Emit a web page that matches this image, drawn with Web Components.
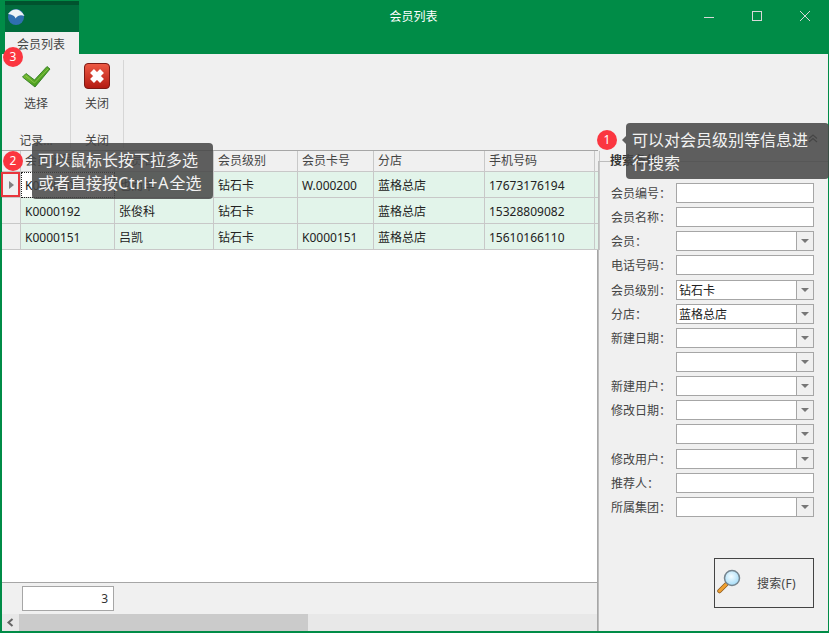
<!DOCTYPE html>
<html lang="zh">
<head>
<meta charset="utf-8">
<title>会员列表</title>
<style>
html, body { margin: 0; height: 100%; overflow: hidden; }
body { font: 12px "Noto Sans", "Noto Sans CJK SC", sans-serif; color: #333; }
</style>
</head>
<body>
<app-window>
    <title-bar slot="title" caption="会员列表" tab="会员列表"></title-bar>
    <ribbon-bar slot="ribbon">
        <ribbon-group label="记录..." width="68">
            <tool-button icon="check" text="选择"></tool-button>
        </ribbon-group>
        <ribbon-group label="关闭" width="52">
            <tool-button icon="close" text="关闭"></tool-button>
        </ribbon-group>
    </ribbon-bar>
    <data-grid slot="grid"></data-grid>
    <search-panel slot="side"></search-panel>
    <guide-tip style="left:30px;top:143px;width:181px;height:56px;padding:6px 0 0 6px">可以鼠标长按下拉多选<br>或者直接按<span style="letter-spacing:.9px">Ctrl+A</span>全选</guide-tip>
    <guide-tip arrow style="left:624px;top:123px;width:203px;height:56px;padding:6px 0 0 6px">可以对会员级别等信息进<br>行搜索</guide-tip>
    <step-badge n="3" style="left:1px;top:47px"></step-badge>
    <step-badge n="2" style="left:1px;top:151px"></step-badge>
    <step-badge n="1" style="left:595px;top:130px"></step-badge>
    <div style="position:absolute;left:-1px;top:172px;width:19px;height:25px;border:2px solid #e8363c;box-sizing:border-box"></div>
</app-window>

<script>
customElements.define('app-window', class AppWindow extends HTMLElement {
    constructor() {
        super();
        this.attachShadow({ mode: 'open' });
        this.shadowRoot.innerHTML = `
        <style>
            :host {
                display: flex;
                flex-direction: column;
                position: relative;
                width: 829px;
                height: 633px;
                box-sizing: border-box;
                border-left: 2px solid #008c47;
                border-right: 1px solid #008c47;
                border-bottom: 2px solid #008c47;
                background: #f0f0f0;
            }
            .body { flex: 1; display: flex; min-height: 0; }
        </style>
        <slot name="title"></slot>
        <slot name="ribbon"></slot>
        <div class="body">
            <slot name="grid"></slot>
            <slot name="side"></slot>
        </div>
        <slot></slot>
        `;
    }
});

customElements.define('title-bar', class TitleBar extends HTMLElement {
    constructor() {
        super();
        this.attachShadow({ mode: 'open' });
    }
    connectedCallback() {
        this.shadowRoot.innerHTML = `
        <style>
            :host {
                display: block;
                position: relative;
                height: 54px;
                margin: 0 -1px 0 -2px;
                background: #008c47;
                flex: none;
            }
            .caption {
                text-align: center;
                color: #fff;
                padding: 9px 2px 0 0;
                line-height: 16px;
                font-size: 12px;
            }
            .app {
                position: absolute;
                left: 5px; top: 1px;
                width: 74px; height: 53px;
                display: flex;
                flex-direction: column;
            }
            .logo {
                height: 31px;
                background: #006b3c;
                border-top: 4px solid #00532e;
                box-sizing: border-box;
                padding: 3px 0 0 2px;
            }
            .logo svg { display: block; }
            .tab {
                flex: 1;
                background: #f0f0f0;
                text-align: left;
                padding: 5px 0 0 12px;
                line-height: 16px;
                color: #444;
            }
            .btns { position: absolute; right: 0; top: 0; display: flex; }
            .btns svg { width: 46px; height: 32px; display: block; }
        </style>
        <div class="caption">${this.getAttribute('caption')}</div>
        <div class="app">
            <div class="logo">
                <svg width="18" height="18" viewBox="0 0 18 18">
                    <circle cx="9" cy="9" r="8" fill="#2f6fb0"/>
                    <path d="M1 6 C4 2 7 1 10 1.500 C13 2 15 4 17.500 8 C14 6.500 11 7 8.500 10.500 C8 8 5 6.500 1 6Z" fill="#eef3f6"/>
                </svg>
            </div>
            <div class="tab">${this.getAttribute('tab')}</div>
        </div>
        <div class="btns">
            <svg viewBox="0 0 46 32"><path d="M13 17.500H23" stroke="#d8d8d8" fill="none"/></svg>
            <svg viewBox="0 0 46 32"><rect x="15.500" y="11.500" width="9" height="9" stroke="#d8d8d8" fill="none"/></svg>
            <svg viewBox="0 0 46 32"><path d="M17 11L27 21M27 11L17 21" stroke="#d8d8d8" fill="none"/></svg>
        </div>
        `;
    }
});

customElements.define('ribbon-bar', class RibbonBar extends HTMLElement {
    constructor() {
        super();
        this.attachShadow({ mode: 'open' });
        this.shadowRoot.innerHTML = `
        <style>
            :host {
                display: flex;
                height: 96px;
                flex: none;
                padding-top: 6px;
                box-sizing: border-box;
                background: #f0f0f0;
            }
        </style>
        <slot></slot>
        `;
    }
});

customElements.define('ribbon-group', class RibbonGroup extends HTMLElement {
    constructor() {
        super();
        this.attachShadow({ mode: 'open' });
    }
    connectedCallback() {
        this.shadowRoot.innerHTML = `
        <style>
            :host {
                display: flex;
                flex-direction: column;
                align-items: center;
                width: ${this.getAttribute('width')}px;
                height: 88px;
                border-right: 1px solid #d6d6d6;
                color: #444;
            }
            .label { margin-top: auto; line-height: 16px; margin-bottom: -1px; }
        </style>
        <slot></slot>
        <div class="label">${this.getAttribute('label')}</div>
        `;
    }
});

const TOOL_ICONS = {
    check: `<svg width="30" height="30" viewBox="0 0 30 30">
        <defs><linearGradient id="g" x1="0" y1="0" x2="1" y2="1"><stop offset="0" stop-color="#8fcb3c"/><stop offset="1" stop-color="#2c8a12"/></linearGradient></defs>
        <path d="M1.500 17 L5 13.500 L13.500 20 L26 6.500 L29 9 L14 27 Z" fill="url(#g)" stroke="#2f7a22" stroke-width=".9" stroke-linejoin="round"/>
        <path d="M5 16 L13.500 23 L27 9" fill="none" stroke="#b6e070" stroke-width=".8" opacity=".6"/>
    </svg>`,
    close: `<svg width="30" height="30" viewBox="0 0 30 30">
        <defs><linearGradient id="r" x1="0" y1="0" x2="0" y2="1"><stop offset="0" stop-color="#ee5a44"/><stop offset="1" stop-color="#b31a12"/></linearGradient></defs>
        <rect x="2.500" y="3.500" width="25" height="25" rx="3.500" fill="url(#r)" stroke="#7c1a14"/>
        <path d="M10 11 L20 21 M20 11 L10 21" stroke="#fff" stroke-width="5.500" fill="none"/>
    </svg>`
};

customElements.define('tool-button', class ToolButton extends HTMLElement {
    constructor() {
        super();
        this.attachShadow({ mode: 'open' });
    }
    connectedCallback() {
        this.shadowRoot.innerHTML = `
        <style>
            :host {
                display: flex;
                flex-direction: column;
                align-items: center;
                color: #444;
            }
            svg { display: block; }
            .text { margin-top: 6px; line-height: 16px; }
        </style>
        ${TOOL_ICONS[this.getAttribute('icon')]}
        <div class="text">${this.getAttribute('text')}</div>
        `;
    }
});

customElements.define('data-grid', class DataGrid extends HTMLElement {
    constructor() {
        super();
        this.attachShadow({ mode: 'open' });
        const head = ['会员编号', '会员名称', '会员级别', '会员卡号', '分店', '手机号码'];
        const rows = [
            ['K0000200', '也而羊', '钻石卡', 'W.000200', '蓝格总店', '17673176194'],
            ['K0000192', '张俊科', '钻石卡', '', '蓝格总店', '15328809082'],
            ['K0000151', '吕凯', '钻石卡', 'K0000151', '蓝格总店', '15610166110']
        ];
        const cell = (c, cls) => `<div class="${cls}">${c}</div>`;
        const body = rows.map((r, i) => `
            <div class="rowhead">${i === 0 ? '<span class="arrow"></span>' : ''}</div>
            ${r.map((c, j) => cell(c, 'td' + (i === 0 && j === 0 ? ' current' : ''))).join('')}
            <div class="td"></div>
        `).join('');
        this.shadowRoot.innerHTML = `
        <style>
            :host {
                display: flex;
                flex-direction: column;
                width: 596px;
                flex: none;
                border-top: 1px solid #a6a6a6;
                border-right: 1px solid #a6a6a6;
                box-sizing: border-box;
                background: #fff;
            }
            .table {
                flex: 1;
                display: grid;
                grid-template-columns: 19px 94px 99px 84px 76px 111px 110px 1fr;
                grid-auto-rows: 26px;
                grid-template-rows: 21px;
                align-content: start;
            }
            .rowhead, .th, .td {
                box-sizing: border-box;
                border-right: 1px solid #c8c8c8;
                border-bottom: 1px solid #c8c8c8;
                padding-left: 4px;
                line-height: 27px;
                white-space: nowrap;
                overflow: hidden;
            }
            .th { background: #f0f0f0; line-height: 19px; color: #444; }
            .rowhead {
                background: #f0f0f0;
                padding: 0;
                display: flex;
                align-items: center;
                justify-content: center;
            }
            .arrow {
                border-left: 5px solid #808080;
                border-top: 4px solid transparent;
                border-bottom: 4px solid transparent;
            }
            .td { background: #e2f4ea; color: #222; }
            .td.current { background: #fff; outline: 1px dotted #222; outline-offset: -1px; }
            .footer {
                flex: none;
                height: 32px;
                box-sizing: border-box;
                border-top: 1px solid #a6a6a6;
                background: #f0f0f0;
                padding: 3px 0 0 20px;
            }
            .count {
                width: 92px;
                height: 25px;
                box-sizing: border-box;
                border: 1px solid #a6a6a6;
                background: #fff;
                text-align: right;
                padding-right: 5px;
                line-height: 23px;
            }
            .scroll {
                flex: none;
                height: 17px;
                display: flex;
                background: #e8e8e8;
            }
            .scroll .left {
                width: 17px;
                display: flex;
                align-items: center;
                justify-content: center;
            }
            .scroll .thumb { width: 289px; background: #cbcbcb; }
        </style>
        <div class="table">
            <div class="rowhead"></div>
            ${head.map(h => cell(h, 'th')).join('')}
            <div class="th"></div>
            ${body}
        </div>
        <div class="footer"><div class="count">3</div></div>
        <div class="scroll">
            <div class="left">
                <svg width="9" height="9" viewBox="0 0 9 9"><path d="M6.500 1L2.500 4.500L6.500 8" fill="none" stroke="#666" stroke-width="2"/></svg>
            </div>
            <div class="thumb"></div>
        </div>
        `;
    }
});

customElements.define('search-field', class SearchField extends HTMLElement {
    constructor() {
        super();
        this.attachShadow({ mode: 'open' });
    }
    connectedCallback() {
        const combo = this.hasAttribute('combo');
        this.shadowRoot.innerHTML = `
        <style>
            :host {
                display: flex;
                align-items: center;
                height: 20px;
                color: #444;
            }
            .label { width: 65px; white-space: nowrap; }
            .box {
                width: 138px;
                height: 20px;
                box-sizing: border-box;
                border: 1px solid #a6a6a6;
                background: #fff;
                display: flex;
            }
            .value { flex: 1; padding-left: 2px; line-height: 20px; color: #222; }
            .drop {
                width: 16px;
                border-left: 1px solid #a6a6a6;
                background: #f0f0f0;
                display: flex;
                align-items: center;
                justify-content: center;
            }
            .drop i {
                border-top: 4px solid #777;
                border-left: 4px solid transparent;
                border-right: 4px solid transparent;
            }
        </style>
        <div class="label">${this.getAttribute('label')}</div>
        <div class="box">
            <div class="value">${this.getAttribute('value') || ''}</div>
            ${combo ? '<div class="drop"><i></i></div>' : ''}
        </div>
        `;
    }
});

customElements.define('search-panel', class SearchPanel extends HTMLElement {
    constructor() {
        super();
        this.attachShadow({ mode: 'open' });
        const fields = [
            ['会员编号：'], ['会员名称：'], ['会员：', 1], ['电话号码：'],
            ['会员级别：', 1, '钻石卡'], ['分店：', 1, '蓝格总店'], ['新建日期：', 1], ['', 1],
            ['新建用户：', 1], ['修改日期：', 1], ['', 1], ['修改用户：', 1],
            ['推荐人：'], ['所属集团：', 1]
        ];
        this.shadowRoot.innerHTML = `
        <style>
            :host {
                display: flex;
                flex-direction: column;
                flex: 1;
                position: relative;
                box-sizing: border-box;
                padding: 33px 0 0 13px;
            }
            .frame {
                position: absolute;
                left: 0; top: 11px; right: 0; bottom: 0;
                border-top: 1px solid #bdbdbd;
                border-left: 1px solid #bdbdbd;
            }
            .title {
                position: absolute;
                left: 12px; top: 3px;
                font-weight: bold;
                line-height: 16px;
                background: #f0f0f0;
                color: #333;
            }
            .collapse { position: absolute; right: 10px; top: -16px; display: block; }
            .fields { display: flex; flex-direction: column; gap: 4.150px; position: relative; }
            .go {
                position: absolute;
                left: 116px; bottom: 23px;
                width: 100px;
                height: 50px;
                box-sizing: border-box;
                border: 1px solid #444;
                display: flex;
                align-items: center;
                color: #444;
            }
            .go svg { margin: -4px 0 0 1px; }
            .go span { margin-left: 13px; letter-spacing: .3px; }
        </style>
        <div class="frame"></div>
        <div class="title">搜索条件</div>
        <svg class="collapse" width="10" height="9" viewBox="0 0 10 9">
            <path d="M1 4.500L5 1L9 4.500M1 8L5 4.500L9 8" fill="none" stroke="#444" stroke-width="1.200"/>
        </svg>
        <div class="fields">
            ${fields.map(f => `<search-field label="${f[0]}"${f[1] ? ' combo' : ''} value="${f[2] || ''}"></search-field>`).join('')}
        </div>
        <div class="go">
            <svg width="28" height="26" viewBox="0 0 28 26">
                <defs><radialGradient id="lens" cx=".45" cy=".4" r=".6"><stop offset="0" stop-color="#f4fcff"/><stop offset="1" stop-color="#a4dcf8"/></radialGradient></defs>
                <path d="M3.500 23 L10 16.500" stroke="#8a5a20" stroke-width="4.500" stroke-linecap="round"/>
                <path d="M3.500 23 L10 16.500" stroke="#f0a030" stroke-width="3" stroke-linecap="round"/>
                <circle cx="16" cy="10" r="7.500" fill="url(#lens)" stroke="#76858f" stroke-width="1.500"/>
            </svg>
            <span>搜索(F)</span>
        </div>
        `;
    }
});

customElements.define('step-badge', class StepBadge extends HTMLElement {
    constructor() {
        super();
        this.attachShadow({ mode: 'open' });
    }
    connectedCallback() {
        this.shadowRoot.innerHTML = `
        <style>
            :host {
                display: block;
                position: absolute;
                width: 20px;
                height: 20px;
                border-radius: 50%;
                background: #fb3640;
                color: #fff;
                text-align: center;
                font-size: 12px;
                line-height: 20px;
            }
        </style>
        ${this.getAttribute('n')}
        `;
    }
});

customElements.define('guide-tip', class GuideTip extends HTMLElement {
    constructor() {
        super();
        this.attachShadow({ mode: 'open' });
        this.shadowRoot.innerHTML = `
        <style>
            :host {
                display: block;
                position: absolute;
                box-sizing: border-box;
                background: rgba(70, 70, 70, .86);
                border-radius: 4px;
                color: #f2f2f2;
                font-size: 16px;
                line-height: 23px;
                white-space: nowrap;
            }
            :host([arrow])::before {
                content: "";
                position: absolute;
                left: -4px;
                top: 13px;
                border-right: 4px solid rgba(70, 70, 70, .86);
                border-top: 4px solid transparent;
                border-bottom: 4px solid transparent;
            }
        </style>
        <slot></slot>
        `;
    }
});
</script>
</body>
</html>
